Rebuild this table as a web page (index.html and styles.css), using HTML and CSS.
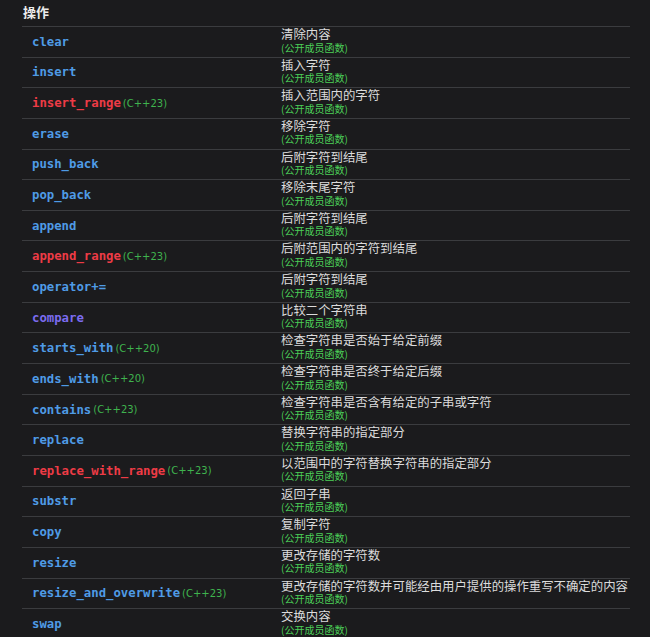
FILE: index.html
```html
<!DOCTYPE html>
<html lang="zh-CN">
<head>
  <meta charset="UTF-8" />
  <title>操作</title>
  <link rel="stylesheet" href="styles.css">
</head>
<body>
  <section class="ops">
    <h3 class="ops-title">操作</h3>
    <div class="row"><div class="name"><code>clear</code></div><div class="desc"><div class="main">清除内容</div><div class="kind">(公开成员函数)</div></div></div>
    <div class="row"><div class="name"><code>insert</code></div><div class="desc"><div class="main">插入字符</div><div class="kind">(公开成员函数)</div></div></div>
    <div class="row"><div class="name"><code class="new">insert_range</code><span class="ver">(C++23)</span></div><div class="desc"><div class="main">插入范围内的字符</div><div class="kind">(公开成员函数)</div></div></div>
    <div class="row"><div class="name"><code>erase</code></div><div class="desc"><div class="main">移除字符</div><div class="kind">(公开成员函数)</div></div></div>
    <div class="row"><div class="name"><code>push_back</code></div><div class="desc"><div class="main">后附字符到结尾</div><div class="kind">(公开成员函数)</div></div></div>
    <div class="row"><div class="name"><code>pop_back</code></div><div class="desc"><div class="main">移除末尾字符</div><div class="kind">(公开成员函数)</div></div></div>
    <div class="row"><div class="name"><code>append</code></div><div class="desc"><div class="main">后附字符到结尾</div><div class="kind">(公开成员函数)</div></div></div>
    <div class="row"><div class="name"><code class="new">append_range</code><span class="ver">(C++23)</span></div><div class="desc"><div class="main">后附范围内的字符到结尾</div><div class="kind">(公开成员函数)</div></div></div>
    <div class="row"><div class="name"><code>operator+=</code></div><div class="desc"><div class="main">后附字符到结尾</div><div class="kind">(公开成员函数)</div></div></div>
    <div class="row"><div class="name"><code class="visited">compare</code></div><div class="desc"><div class="main">比较二个字符串</div><div class="kind">(公开成员函数)</div></div></div>
    <div class="row"><div class="name"><code>starts_with</code><span class="ver">(C++20)</span></div><div class="desc"><div class="main">检查字符串是否始于给定前缀</div><div class="kind">(公开成员函数)</div></div></div>
    <div class="row"><div class="name"><code>ends_with</code><span class="ver">(C++20)</span></div><div class="desc"><div class="main">检查字符串是否终于给定后缀</div><div class="kind">(公开成员函数)</div></div></div>
    <div class="row"><div class="name"><code>contains</code><span class="ver">(C++23)</span></div><div class="desc"><div class="main">检查字符串是否含有给定的子串或字符</div><div class="kind">(公开成员函数)</div></div></div>
    <div class="row"><div class="name"><code>replace</code></div><div class="desc"><div class="main">替换字符串的指定部分</div><div class="kind">(公开成员函数)</div></div></div>
    <div class="row"><div class="name"><code class="new">replace_with_range</code><span class="ver">(C++23)</span></div><div class="desc"><div class="main">以范围中的字符替换字符串的指定部分</div><div class="kind">(公开成员函数)</div></div></div>
    <div class="row"><div class="name"><code>substr</code></div><div class="desc"><div class="main">返回子串</div><div class="kind">(公开成员函数)</div></div></div>
    <div class="row"><div class="name"><code>copy</code></div><div class="desc"><div class="main">复制字符</div><div class="kind">(公开成员函数)</div></div></div>
    <div class="row"><div class="name"><code>resize</code></div><div class="desc"><div class="main">更改存储的字符数</div><div class="kind">(公开成员函数)</div></div></div>
    <div class="row"><div class="name"><code>resize_and_overwrite</code><span class="ver">(C++23)</span></div><div class="desc"><div class="main">更改存储的字符数并可能经由用户提供的操作重写不确定的内容</div><div class="kind">(公开成员函数)</div></div></div>
    <div class="row"><div class="name"><code>swap</code></div><div class="desc"><div class="main">交换内容</div><div class="kind">(公开成员函数)</div></div></div>
  </section>
</body>
</html>
```

FILE: styles.css
```css
body {
  background: #1b1b1d;
  color: #dcdcdc;
  margin: 0;
  padding: 0;
  font-family: "Noto Sans CJK SC", "Noto Sans", sans-serif;
}
.ops {
  margin-left: 22px;
  width: 608px;
}
.ops-title {
  margin: 0;
  height: 26px;
  padding: 3px 0 0 1px;
  box-sizing: border-box;
  font-size: 13px;
  line-height: 18px;
  font-weight: bold;
  color: #ececec;
}
.row {
  display: grid;
  grid-template-columns: 259px 1fr;
  border-top: 1px solid #3b3c3f;
  height: 30.65px;
  box-sizing: border-box;
}
.name {
  display: flex;
  align-items: center;
  padding-left: 10px;
}
code {
  font-family: "DejaVu Sans Mono", monospace;
  font-weight: bold;
  font-size: 12.3px;
  color: #4f9be6;
}
code.new {
  color: #ee3b46;
}
code.visited {
  color: #7b6cf0;
}
.ver {
  font-family: "DejaVu Sans", sans-serif;
  font-size: 10px;
  color: #3fb34e;
  margin-left: 2px;
}
.desc {
  white-space: nowrap;
}
.main {
  font-size: 12.4px;
  line-height: 14.5px;
}
.kind {
  font-size: 10px;
  line-height: 12px;
  color: #4ccf58;
}
```
